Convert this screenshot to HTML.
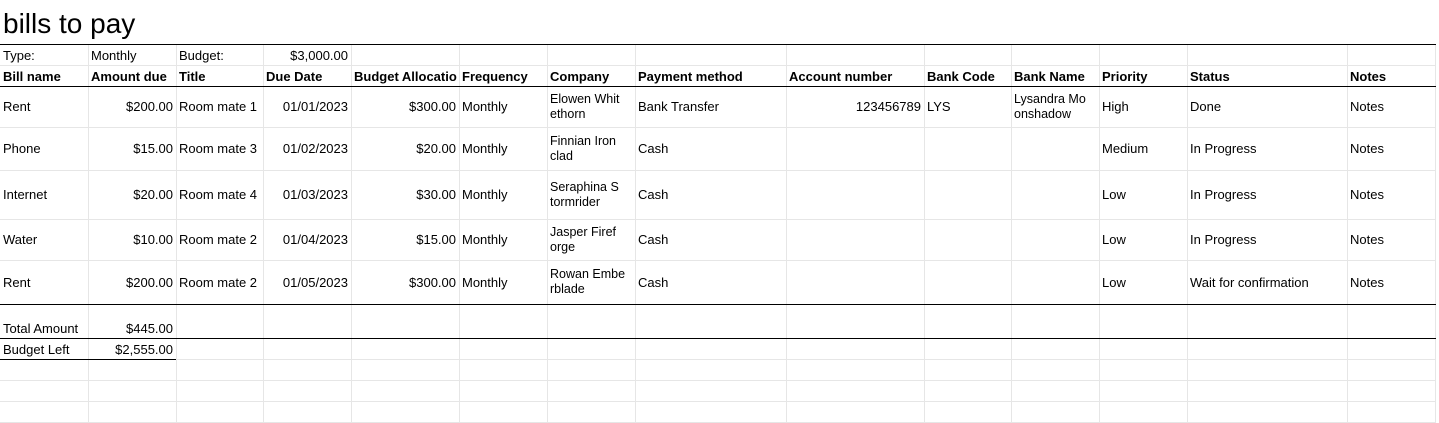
<!DOCTYPE html>
<html><head><meta charset="utf-8"><style>
*{margin:0;padding:0;box-sizing:border-box}
body{width:1439px;height:423px;background:#fff;position:relative;overflow:hidden;font-family:"Liberation Sans",Arial,sans-serif;font-size:13px;color:#000}
.v{position:absolute;top:44px;height:379px;width:1px;background:#e6e6e6}
.h{position:absolute;left:0;width:1436px;height:1px;background:#e6e6e6}
.b{position:absolute;height:1px;background:#000}
.c{position:absolute;display:flex;align-items:center;padding:0 3px;white-space:nowrap;overflow:hidden}
.r{justify-content:flex-end}
.w{font-size:12.5px;line-height:15px}
.bd{font-weight:bold}
.bt{align-items:flex-end;padding-bottom:2px}
</style></head><body>
<div style="position:absolute;left:3px;top:7px;font-size:28px;line-height:33px">bills to pay</div>
<div class="v" style="left:88px"></div><div class="v" style="left:176px"></div><div class="v" style="left:263px"></div><div class="v" style="left:351px"></div><div class="v" style="left:459px"></div><div class="v" style="left:547px"></div><div class="v" style="left:635px"></div><div class="v" style="left:786px"></div><div class="v" style="left:924px"></div><div class="v" style="left:1011px"></div><div class="v" style="left:1099px"></div><div class="v" style="left:1187px"></div><div class="v" style="left:1347px"></div><div class="v" style="left:1435px"></div>
<div class="h" style="top:65px"></div><div class="h" style="top:127px"></div><div class="h" style="top:170px"></div><div class="h" style="top:219px"></div><div class="h" style="top:260px"></div><div class="h" style="top:359px"></div><div class="h" style="top:380px"></div><div class="h" style="top:401px"></div><div class="h" style="top:422px"></div>
<div class="b" style="top:44px;left:0;width:1436px"></div>
<div class="b" style="top:86px;left:0;width:1436px"></div>
<div class="b" style="top:304px;left:0;width:1436px"></div>
<div class="b" style="top:338px;left:0;width:1436px"></div>
<div class="b" style="top:359px;left:0;width:176px"></div>

<div class="c" style="left:0;top:45px;width:88px;height:20px">Type:</div>
<div class="c" style="left:88px;top:45px;width:88px;height:20px">Monthly</div>
<div class="c" style="left:176px;top:45px;width:87px;height:20px">Budget:</div>
<div class="c r" style="left:263px;top:45px;width:88px;height:20px">$3,000.00</div>

<div class="c bd" style="left:0;top:66px;width:88px;height:20px">Bill name</div>
<div class="c bd" style="left:88px;top:66px;width:88px;height:20px">Amount due</div>
<div class="c bd" style="left:176px;top:66px;width:87px;height:20px">Title</div>
<div class="c bd" style="left:263px;top:66px;width:88px;height:20px">Due Date</div>
<div class="c bd" style="left:351px;top:66px;width:108px;height:20px">Budget Allocatio</div>
<div class="c bd" style="left:459px;top:66px;width:88px;height:20px">Frequency</div>
<div class="c bd" style="left:547px;top:66px;width:88px;height:20px">Company</div>
<div class="c bd" style="left:635px;top:66px;width:151px;height:20px">Payment method</div>
<div class="c bd" style="left:786px;top:66px;width:138px;height:20px">Account number</div>
<div class="c bd" style="left:924px;top:66px;width:87px;height:20px">Bank Code</div>
<div class="c bd" style="left:1011px;top:66px;width:88px;height:20px">Bank Name</div>
<div class="c bd" style="left:1099px;top:66px;width:88px;height:20px">Priority</div>
<div class="c bd" style="left:1187px;top:66px;width:160px;height:20px">Status</div>
<div class="c bd" style="left:1347px;top:66px;width:88px;height:20px">Notes</div>

<div class="c" style="left:0;top:87px;width:88px;height:39px">Rent</div>
<div class="c r" style="left:88px;top:87px;width:88px;height:39px">$200.00</div>
<div class="c" style="left:176px;top:87px;width:87px;height:39px">Room mate 1</div>
<div class="c r" style="left:263px;top:87px;width:88px;height:39px">01/01/2023</div>
<div class="c r" style="left:351px;top:87px;width:108px;height:39px">$300.00</div>
<div class="c" style="left:459px;top:87px;width:88px;height:39px">Monthly</div>
<div class="c w" style="left:547px;top:87px;width:88px;height:39px">Elowen Whit<br>ethorn</div>
<div class="c" style="left:635px;top:87px;width:151px;height:39px">Bank Transfer</div>
<div class="c r" style="left:786px;top:87px;width:138px;height:39px">123456789</div>
<div class="c" style="left:924px;top:87px;width:87px;height:39px">LYS</div>
<div class="c w" style="left:1011px;top:87px;width:88px;height:39px">Lysandra Mo<br>onshadow</div>
<div class="c" style="left:1099px;top:87px;width:88px;height:39px">High</div>
<div class="c" style="left:1187px;top:87px;width:160px;height:39px">Done</div>
<div class="c" style="left:1347px;top:87px;width:88px;height:39px">Notes</div>

<div class="c" style="left:0;top:128px;width:88px;height:41px">Phone</div>
<div class="c r" style="left:88px;top:128px;width:88px;height:41px">$15.00</div>
<div class="c" style="left:176px;top:128px;width:87px;height:41px">Room mate 3</div>
<div class="c r" style="left:263px;top:128px;width:88px;height:41px">01/02/2023</div>
<div class="c r" style="left:351px;top:128px;width:108px;height:41px">$20.00</div>
<div class="c" style="left:459px;top:128px;width:88px;height:41px">Monthly</div>
<div class="c w" style="left:547px;top:128px;width:88px;height:41px">Finnian Iron<br>clad</div>
<div class="c" style="left:635px;top:128px;width:151px;height:41px">Cash</div>
<div class="c" style="left:1099px;top:128px;width:88px;height:41px">Medium</div>
<div class="c" style="left:1187px;top:128px;width:160px;height:41px">In Progress</div>
<div class="c" style="left:1347px;top:128px;width:88px;height:41px">Notes</div>

<div class="c" style="left:0;top:171px;width:88px;height:47px">Internet</div>
<div class="c r" style="left:88px;top:171px;width:88px;height:47px">$20.00</div>
<div class="c" style="left:176px;top:171px;width:87px;height:47px">Room mate 4</div>
<div class="c r" style="left:263px;top:171px;width:88px;height:47px">01/03/2023</div>
<div class="c r" style="left:351px;top:171px;width:108px;height:47px">$30.00</div>
<div class="c" style="left:459px;top:171px;width:88px;height:47px">Monthly</div>
<div class="c w" style="left:547px;top:171px;width:88px;height:47px">Seraphina S<br>tormrider</div>
<div class="c" style="left:635px;top:171px;width:151px;height:47px">Cash</div>
<div class="c" style="left:1099px;top:171px;width:88px;height:47px">Low</div>
<div class="c" style="left:1187px;top:171px;width:160px;height:47px">In Progress</div>
<div class="c" style="left:1347px;top:171px;width:88px;height:47px">Notes</div>

<div class="c" style="left:0;top:220px;width:88px;height:39px">Water</div>
<div class="c r" style="left:88px;top:220px;width:88px;height:39px">$10.00</div>
<div class="c" style="left:176px;top:220px;width:87px;height:39px">Room mate 2</div>
<div class="c r" style="left:263px;top:220px;width:88px;height:39px">01/04/2023</div>
<div class="c r" style="left:351px;top:220px;width:108px;height:39px">$15.00</div>
<div class="c" style="left:459px;top:220px;width:88px;height:39px">Monthly</div>
<div class="c w" style="left:547px;top:220px;width:88px;height:39px">Jasper Firef<br>orge</div>
<div class="c" style="left:635px;top:220px;width:151px;height:39px">Cash</div>
<div class="c" style="left:1099px;top:220px;width:88px;height:39px">Low</div>
<div class="c" style="left:1187px;top:220px;width:160px;height:39px">In Progress</div>
<div class="c" style="left:1347px;top:220px;width:88px;height:39px">Notes</div>

<div class="c" style="left:0;top:261px;width:88px;height:42px">Rent</div>
<div class="c r" style="left:88px;top:261px;width:88px;height:42px">$200.00</div>
<div class="c" style="left:176px;top:261px;width:87px;height:42px">Room mate 2</div>
<div class="c r" style="left:263px;top:261px;width:88px;height:42px">01/05/2023</div>
<div class="c r" style="left:351px;top:261px;width:108px;height:42px">$300.00</div>
<div class="c" style="left:459px;top:261px;width:88px;height:42px">Monthly</div>
<div class="c w" style="left:547px;top:261px;width:88px;height:42px">Rowan Embe<br>rblade</div>
<div class="c" style="left:635px;top:261px;width:151px;height:42px">Cash</div>
<div class="c" style="left:1099px;top:261px;width:88px;height:42px">Low</div>
<div class="c" style="left:1187px;top:261px;width:160px;height:42px">Wait for confirmation</div>
<div class="c" style="left:1347px;top:261px;width:88px;height:42px">Notes</div>

<div class="c bt" style="left:0;top:305px;width:88px;height:33px">Total Amount</div>
<div class="c r bt" style="left:88px;top:305px;width:88px;height:33px">$445.00</div>
<div class="c" style="left:0;top:339px;width:88px;height:20px">Budget Left</div>
<div class="c r" style="left:88px;top:339px;width:88px;height:20px">$2,555.00</div>
</body></html>
